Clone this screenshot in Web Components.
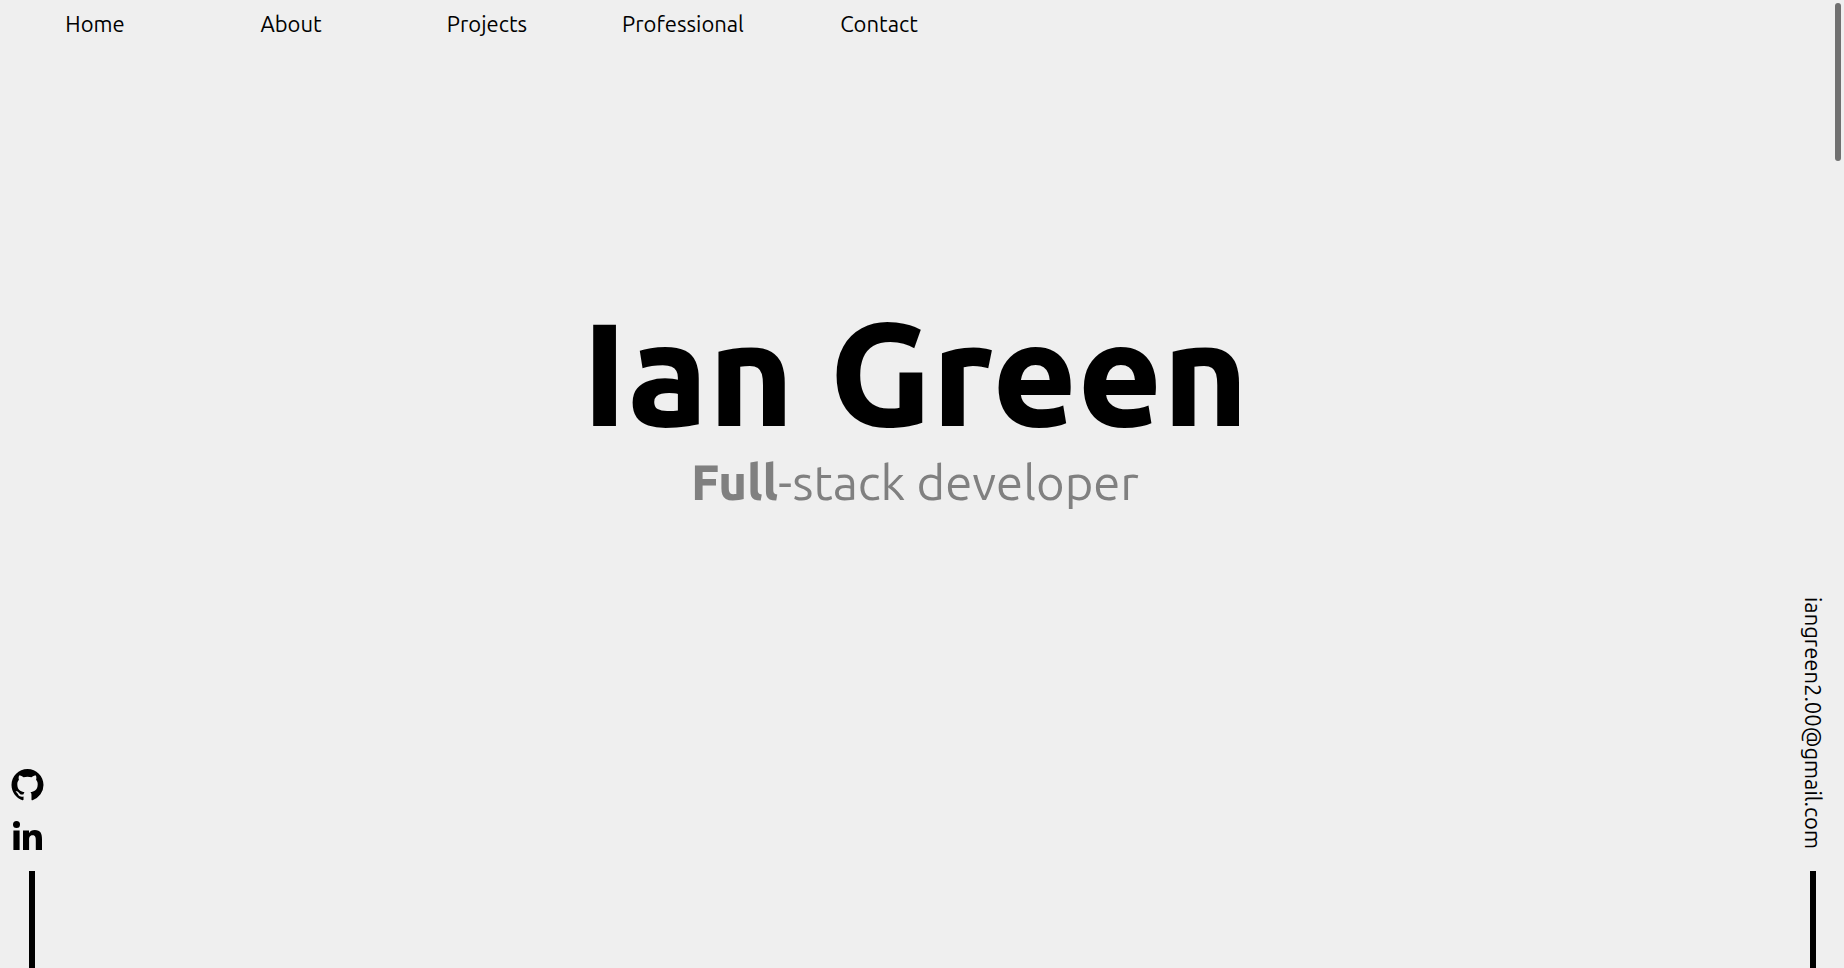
<!DOCTYPE html>
<html lang="en">
<head>
<meta charset="utf-8">
<meta name="viewport" content="width=device-width, initial-scale=1">
<title>Ian Green</title>
<style>
  html, body { margin: 0; background: #efefef; color: #000; }
  body { font-family: Ubuntu, "Open Sans", "Noto Sans", sans-serif; font-size: 22px; line-height: 32px; }
</style>
</head>
<body>
<portfolio-page>
  <site-nav slot="nav">
    <nav-link href="#home">Home</nav-link>
    <nav-link href="#about">About</nav-link>
    <nav-link href="#projects">Projects</nav-link>
    <nav-link href="#professional">Professional</nav-link>
    <nav-link href="#contact">Contact</nav-link>
  </site-nav>
  <social-rail slot="left"></social-rail>
  <hero-banner slot="main">Ian Green<hero-role slot="role"><span slot="strong">Full</span>-stack developer</hero-role></hero-banner>
  <email-rail slot="right" address="iangreen2.00@gmail.com"></email-rail>
  <scroll-thumb slot="overlay"></scroll-thumb>
</portfolio-page>
<script>
const define = (name, html, setup) => {
  const template = document.createElement('template');
  template.innerHTML = html;
  customElements.define(name, class extends HTMLElement {
    constructor() {
      super();
      this.attachShadow({ mode: 'open' }).append(template.content.cloneNode(true));
    }
    connectedCallback() { if (setup) setup(this, this.shadowRoot); }
  });
};

define('portfolio-page', `
  <style>
    :host { display: flex; flex-direction: column; min-height: 100vh; }
    .stage { flex: 1; display: grid; grid-template-columns: 64px 1fr 78px; }
  </style>
  <slot name="nav"></slot>
  <div class="stage">
    <slot name="left"></slot><slot name="main"></slot><slot name="right"></slot>
  </div>
  <slot name="overlay"></slot>`);

define('site-nav', `
  <style>
    :host { display: block; }
    nav { display: grid; grid-template-columns: repeat(5, 172px); gap: 24px; padding: 8px 9px; }
  </style>
  <nav aria-label="Main"><slot></slot></nav>`);

define('nav-link', `
  <style>
    :host { display: block; text-align: center; }
    a { color: inherit; text-decoration: none; }
  </style>
  <a><slot></slot></a>`,
  (el, root) => root.querySelector('a').setAttribute('href', el.getAttribute('href')));

define('hero-banner', `
  <style>
    :host { display: block; padding-top: 244px; text-align: center; }
    h1 { margin: 0; font-size: 146px; line-height: 160px; font-weight: 800; }
    p { margin: 0; font-size: 49px; line-height: 60px; color: gray; }
  </style>
  <h1><slot></slot></h1>
  <p><slot name="role"></slot></p>`);

define('hero-role', `
  <style>
    :host { display: inline; }
    b { font-weight: 800; }
  </style><b><slot name="strong"></slot></b><slot></slot>`);

define('social-rail', `
  <style>
    :host { display: flex; flex-direction: column; justify-content: flex-end; }
    nav { display: grid; gap: 20px; padding: 0 0 18px 11px; }
    a { display: block; height: 32px; color: inherit; }
    svg { display: block; fill: currentColor; }
    .bar { width: 6px; height: 97px; margin-left: 29px; background: #000; }
  </style>
  <nav aria-label="Social">
  <a href="https://github.com" aria-label="GitHub">
    <svg width="33" height="32" viewBox="0 0 24 24"><path d="M12 0C5.37 0 0 5.37 0 12c0 5.3 3.44 9.8 8.2 11.39.6.11.82-.26.82-.58v-2.24c-3.34.73-4.04-1.42-4.04-1.42-.55-1.39-1.33-1.76-1.33-1.76-1.09-.74.08-.73.08-.73 1.2.09 1.84 1.24 1.84 1.24 1.07 1.83 2.81 1.3 3.49 1 .11-.78.42-1.31.76-1.61-2.66-.3-5.47-1.33-5.47-5.93 0-1.31.47-2.38 1.24-3.22-.13-.3-.54-1.52.11-3.18 0 0 1.01-.32 3.3 1.23a11.5 11.5 0 0 1 6 0c2.29-1.55 3.3-1.23 3.3-1.23.65 1.66.24 2.88.12 3.18.77.84 1.23 1.91 1.23 3.22 0 4.61-2.81 5.62-5.48 5.92.43.37.82 1.1.82 2.22v3.29c0 .32.21.7.82.58A12 12 0 0 0 24 12c0-6.63-5.37-12-12-12z"/></svg>
  </a>
  <a href="https://www.linkedin.com" aria-label="LinkedIn">
    <svg width="32" height="32" viewBox="0 0 32 32"><circle cx="5.5" cy="3.5" r="3.5"/><path d="M2.4 9.5h6.200V29H2.400zM12 9.500h6v2.700c1-1.900 3-3.100 5.800-3.100C29.700 9.100 31 13 31 18.200V29h-6.200v-9.500c0-2.600-.1-5.200-3.200-5.200s-3.500 2.400-3.500 5V29H12z"/></svg>
  </a>
  </nav>
  <div class="bar"></div>`);

define('email-rail', `
  <style>
    :host { display: flex; flex-direction: column; justify-content: flex-end; align-items: center; padding: 0 15px 0 31px; }
    a { writing-mode: vertical-rl; color: inherit; text-decoration: none; margin-bottom: 22px; }
    .bar { width: 6px; height: 97px; background: #000; }
  </style>
  <a></a>
  <div class="bar"></div>`,
  (el, root) => {
    const link = root.querySelector('a');
    link.textContent = el.getAttribute('address');
    link.setAttribute('href', 'mailto:' + el.getAttribute('address'));
  });

define('scroll-thumb', `
  <style>
    :host { position: fixed; top: 3px; right: 3px; width: 6px; height: 158px; border-radius: 3px; background: #707070; }
  </style>`);
</script>
</body>
</html>
